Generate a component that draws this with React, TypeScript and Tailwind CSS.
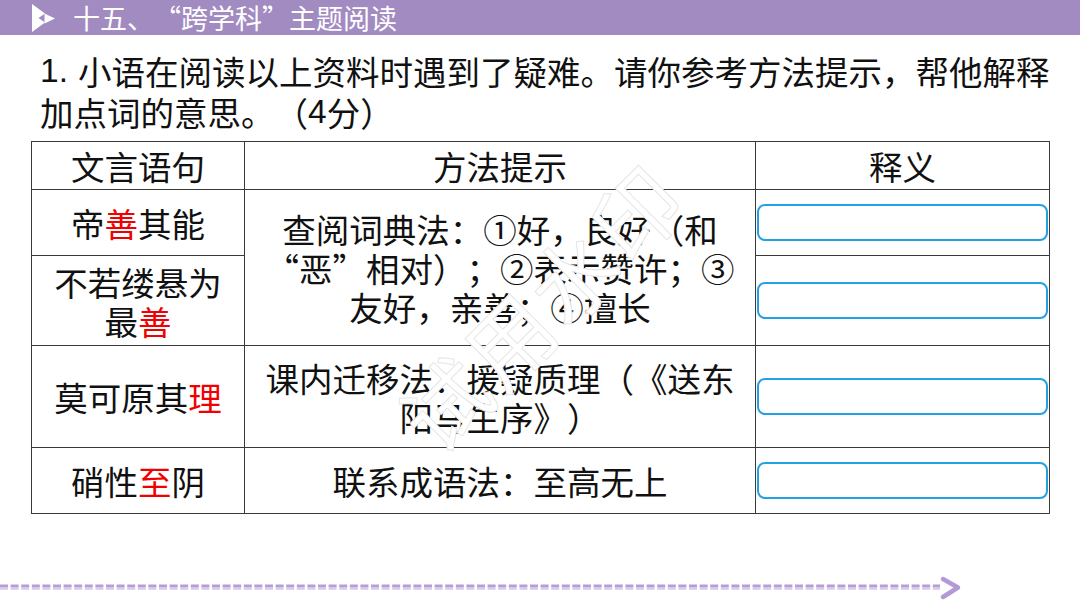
const cell = 'border border-[#3a3a3a] p-0 text-center align-middle';

function AnswerBox() {
  return <div className="mx-[1px] h-[37px] rounded-[8px] border-[2.5px] border-[#22a2e2]" />;
}

function Red({ children }: { children: React.ReactNode }) {
  return <span className="text-[#f00000]">{children}</span>;
}

// full-width quote marks, as in the slide font
function Q({ children }: { children: React.ReactNode }) {
  return <span className="[font-feature-settings:'fwid']">{children}</span>;
}

export default function App() {
  return (
    <div
      lang="zh-CN"
      className="relative h-[608px] w-[1080px] overflow-hidden bg-white font-['Noto_Sans_CJK_SC',sans-serif] text-[#111] [text-spacing-trim:space-all]"
    >
      {/* Title bar */}
      <div className="flex h-[35px] items-center bg-[#a28bc1] pl-[32px]">
        <svg width="24" height="28" viewBox="0 0 24 28" className="shrink-0">
          <polygon points="0,0 13,9.5 6.5,14 13,18.5 0,28" fill="#fff" />
          <polygon points="12.5,9.5 23,14.5 12.5,19.5" fill="#fff" />
        </svg>
        <span className="ml-[17px] whitespace-nowrap text-[27px] leading-[35px] text-white">
          十五、<Q>“</Q>跨学科<Q>”</Q>主题阅读
        </span>
      </div>

      {/* Question */}
      <div className="pl-[40px] pt-[15px] text-[33.5px]">
        <div className="flex h-[41px] items-center whitespace-nowrap leading-none">
          <span className="mr-[10px] font-['Liberation_Sans',sans-serif]">1.</span>
          <span>小语在阅读以上资料时遇到了疑难。请你参考方法提示，帮他解释</span>
        </div>
        <div className="flex h-[41px] items-center whitespace-nowrap leading-none">
          <span>加点词的意思。（</span>
          <span className="font-['Liberation_Sans',sans-serif]">4</span>
          <span>分）</span>
        </div>
      </div>

      {/* Table */}
      <table className="ml-[31px] mt-[9px] w-[1018px] table-fixed border-collapse text-[33.5px] leading-[39px]">
        <colgroup>
          <col className="w-[213px]" />
          <col className="w-[511px]" />
          <col className="w-[294px]" />
        </colgroup>
        <tbody>
          <tr className="h-[48px]">
            <td className={cell}>文言语句</td>
            <td className={cell}>方法提示</td>
            <td className={cell}>释义</td>
          </tr>
          <tr className="h-[66px]">
            <td className={cell}>
              帝<Red>善</Red>其能
            </td>
            <td className={`${cell} whitespace-nowrap`} rowSpan={2}>
              查阅词典法：①好，良好（和
              <br />
              <Q>“</Q>恶<Q>”</Q>相对）；②表示赞许；③
              <br />
              友好，亲善；④擅长
            </td>
            <td className={cell}>
              <AnswerBox />
            </td>
          </tr>
          <tr className="h-[90px]">
            <td className={cell}>
              不若缕悬为
              <br />
              最<Red>善</Red>
            </td>
            <td className={cell}>
              <AnswerBox />
            </td>
          </tr>
          <tr className="h-[102px]">
            <td className={cell}>
              莫可原其<Red>理</Red>
            </td>
            <td className={`${cell} whitespace-nowrap`}>
              课内迁移法：援疑质理（《送东
              <br />
              阳马生序》）
            </td>
            <td className={cell}>
              <AnswerBox />
            </td>
          </tr>
          <tr className="h-[66px]">
            <td className={cell}>
              硝性<Red>至</Red>阴
            </td>
            <td className={cell}>联系成语法：至高无上</td>
            <td className={cell}>
              <AnswerBox />
            </td>
          </tr>
        </tbody>
      </table>

      {/* Bottom dashed arrow */}
      <svg width="1080" height="30" viewBox="0 0 1080 30" className="mt-[59px] block">
        <line x1="0" y1="12.8" x2="940" y2="12.8" stroke="#b59dd8" strokeWidth="2.6" strokeDasharray="8 2.6" />
        <line x1="0" y1="15.4" x2="940" y2="15.4" stroke="#d7c9eb" strokeWidth="2.6" strokeDasharray="8 2.6" />
        <polyline points="943,6 958,14.5 943,24" fill="none" stroke="#b39ad6" strokeWidth="4.5" strokeLinecap="round" strokeLinejoin="round" />
      </svg>

      {/* Watermark */}
      <div className="pointer-events-none absolute left-[360px] top-[262px] rotate-[-45deg] whitespace-nowrap text-[86px] leading-none tracking-[4px] text-white [-webkit-text-stroke:1px_#e6e6e6]">
        试用水印
      </div>
    </div>
  );
}
